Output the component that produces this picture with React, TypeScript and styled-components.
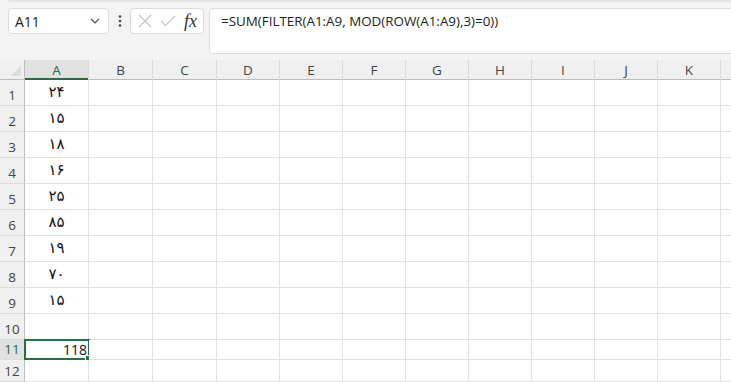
import styled, { createGlobalStyle } from 'styled-components';

const GlobalStyle = createGlobalStyle`
  html, body {
    margin: 0;
    padding: 0;
    background: #f3f3f3;
    overflow: hidden;
  }
  body {
    font-family: "Open Sans", "Noto Sans", sans-serif;
  }
`;

const COLUMNS = ['A', 'B', 'C', 'D', 'E', 'F', 'G', 'H', 'I', 'J', 'K', ''];
const COL_WIDTHS = [64, 64, 64, 63, 63, 63, 63, 63, 63, 63, 63, 63];
const VALUES = ['۲۴', '۱۵', '۱۸', '۱۶', '۲۵', '۸۵', '۱۹', '۷۰', '۱۵'];
const ROW_HEIGHTS = [26, 26, 26, 26, 26, 26, 26, 26, 26, 26, 20, 22];
const SELECTED_ROW = 11;

const App = () => {
  return (
    <Page>
      <GlobalStyle />
      <TopStrip />
      <FormulaRow>
        <NameBox>
          <span>A11</span>
          <svg width="10" height="6" viewBox="0 0 10 6">
            <path d="M1 1 L5 5 L9 1" fill="none" stroke="#555" strokeWidth="1.2" />
          </svg>
        </NameBox>
        <Dots>
          <svg width="4" height="12" viewBox="0 0 4 12">
            <circle cx="2" cy="1.5" r="1.3" fill="#444" />
            <circle cx="2" cy="6" r="1.3" fill="#444" />
            <circle cx="2" cy="10.5" r="1.3" fill="#444" />
          </svg>
        </Dots>
        <FxBox>
          <svg width="14" height="14" viewBox="0 0 14 14">
            <path d="M1 1 L13 13 M13 1 L1 13" stroke="#c4c4c4" strokeWidth="1.2" />
          </svg>
          <svg width="16" height="12" viewBox="0 0 16 12">
            <path d="M1 6 L5.5 10.5 L15 1" fill="none" stroke="#c4c4c4" strokeWidth="1.2" />
          </svg>
          <FxLabel>fx</FxLabel>
        </FxBox>
        <FormulaInput>=SUM(FILTER(A1:A9, MOD(ROW(A1:A9),3)=0))</FormulaInput>
      </FormulaRow>

      <Sheet>
        <HeaderRow>
          <Corner>
            <svg width="10" height="10" viewBox="0 0 10 10">
              <path d="M10 0 L10 10 L0 10 Z" fill="#dcdcdc" />
            </svg>
          </Corner>
          {COLUMNS.map((c, i) => (
            <ColHeader key={i} $active={c === 'A'} style={{ width: COL_WIDTHS[i] }}>
              {c}
            </ColHeader>
          ))}
        </HeaderRow>
        {ROW_HEIGHTS.map((h, r) => {
          const rowNum = r + 1;
          return (
            <Row key={rowNum} style={{ height: h }}>
              <RowHeader $active={rowNum === SELECTED_ROW}>{rowNum}</RowHeader>
              {COLUMNS.map((c, i) => (
                <Cell key={i} style={{ width: COL_WIDTHS[i] }}>
                  {c === 'A' && VALUES[r] && <PersianValue>{VALUES[r]}</PersianValue>}
                  {c === 'A' && rowNum === SELECTED_ROW && (
                    <Selection>
                      <NumberValue>118</NumberValue>
                      <FillHandle />
                    </Selection>
                  )}
                </Cell>
              ))}
            </Row>
          );
        })}
      </Sheet>
    </Page>
  );
};

const Page = styled.div`
  width: 731px;
  height: 382px;
  overflow: hidden;
  background: #f3f3f3;
`;

const TopStrip = styled.div`
  height: 2px;
  margin-left: 8px;
  background: #e4e4e4;
  border-bottom-left-radius: 3px;
`;

const FormulaRow = styled.div`
  display: flex;
  align-items: flex-start;
  padding: 6px 0 0 8px;
  height: 58px;
  box-sizing: border-box;
`;

const NameBox = styled.div`
  width: 101px;
  height: 26px;
  box-sizing: border-box;
  background: #fff;
  border: 1px solid #dcdcdc;
  border-radius: 4px;
  display: flex;
  align-items: center;
  justify-content: space-between;
  padding: 0 8px 0 6px;
  font-size: 14px;
  color: #222;
`;

const Dots = styled.div`
  width: 21px;
  height: 26px;
  display: flex;
  align-items: center;
  justify-content: center;
`;

const FxBox = styled.div`
  width: 74px;
  height: 26px;
  box-sizing: border-box;
  background: #fff;
  border: 1px solid #dcdcdc;
  border-radius: 4px;
  display: flex;
  align-items: center;
  gap: 8px;
  padding: 0 6px 0 7px;
`;

const FxLabel = styled.span`
  font-family: "Liberation Serif", "DejaVu Serif", serif;
  font-style: italic;
  font-size: 18px;
  color: #333;
  margin-left: auto;
  line-height: 1;
`;

const FormulaInput = styled.div`
  flex: 1;
  margin-left: 5px;
  margin-right: -6px;
  height: 46px;
  box-sizing: border-box;
  background: #fff;
  border: 1px solid #dcdcdc;
  border-radius: 4px;
  padding: 3px 11px;
  font-size: 13.4px;
  color: #222;
`;

const Sheet = styled.div`
  display: flex;
  flex-direction: column;
`;

const HeaderRow = styled.div`
  flex: none;
  display: flex;
  height: 20px;
  border-bottom: 1px solid #bdbdbd;
  box-sizing: border-box;
  background: #f0f0f0;
`;

const Corner = styled.div`
  width: 25px;
  flex: none;
  display: flex;
  align-items: flex-end;
  justify-content: flex-end;
  padding: 0 3px 3px 0;
  box-sizing: border-box;
  border-right: 1px solid #bdbdbd;
`;

const ColHeader = styled.div<{ $active?: boolean }>`
  flex: none;
  box-sizing: border-box;
  display: flex;
  align-items: center;
  justify-content: center;
  font-size: 13.5px;
  color: ${(p) => (p.$active ? '#1e6b45' : '#444')};
  background: ${(p) => (p.$active ? '#e1e1e1' : 'transparent')};
  border-right: 1px solid #dadada;
  box-shadow: ${(p) => (p.$active ? 'inset 0 -2px 0 #217346' : 'none')};
  margin-bottom: -1px;
`;

const Row = styled.div`
  flex: none;
  display: flex;
  box-sizing: border-box;
`;

const RowHeader = styled.div<{ $active?: boolean }>`
  width: 25px;
  flex: none;
  box-sizing: border-box;
  display: flex;
  align-items: flex-end;
  justify-content: center;
  padding-bottom: 1px;
  font-size: 13.5px;
  color: ${(p) => (p.$active ? '#1e6b45' : '#444')};
  background: ${(p) => (p.$active ? '#e1e1e1' : '#f0f0f0')};
  border-right: 1px solid #bdbdbd;
  border-bottom: 1px solid #dadada;
`;

const Cell = styled.div`
  flex: none;
  position: relative;
  box-sizing: border-box;
  background: #fff;
  border-right: 1px solid #e1e1e1;
  border-bottom: 1px solid #e1e1e1;
  display: flex;
  align-items: center;
  justify-content: center;
`;

const PersianValue = styled.span`
  font-family: "DejaVu Sans", "Noto Sans", sans-serif;
  font-size: 15px;
  letter-spacing: -1px;
  color: #111;
  padding-bottom: 2px;
`;

const Selection = styled.div`
  position: absolute;
  left: -1px;
  top: -1px;
  right: -2px;
  bottom: -1px;
  border: 2px solid #217346;
  display: flex;
  align-items: center;
  justify-content: flex-end;
  padding-right: 1px;
`;

const NumberValue = styled.span`
  font-family: "Open Sans", "Noto Sans", sans-serif;
  font-size: 14px;
  color: #111;
`;

const FillHandle = styled.div`
  position: absolute;
  right: -4px;
  bottom: -4px;
  width: 5px;
  height: 5px;
  background: #217346;
  border: 1px solid #fff;
`;

export default App;
